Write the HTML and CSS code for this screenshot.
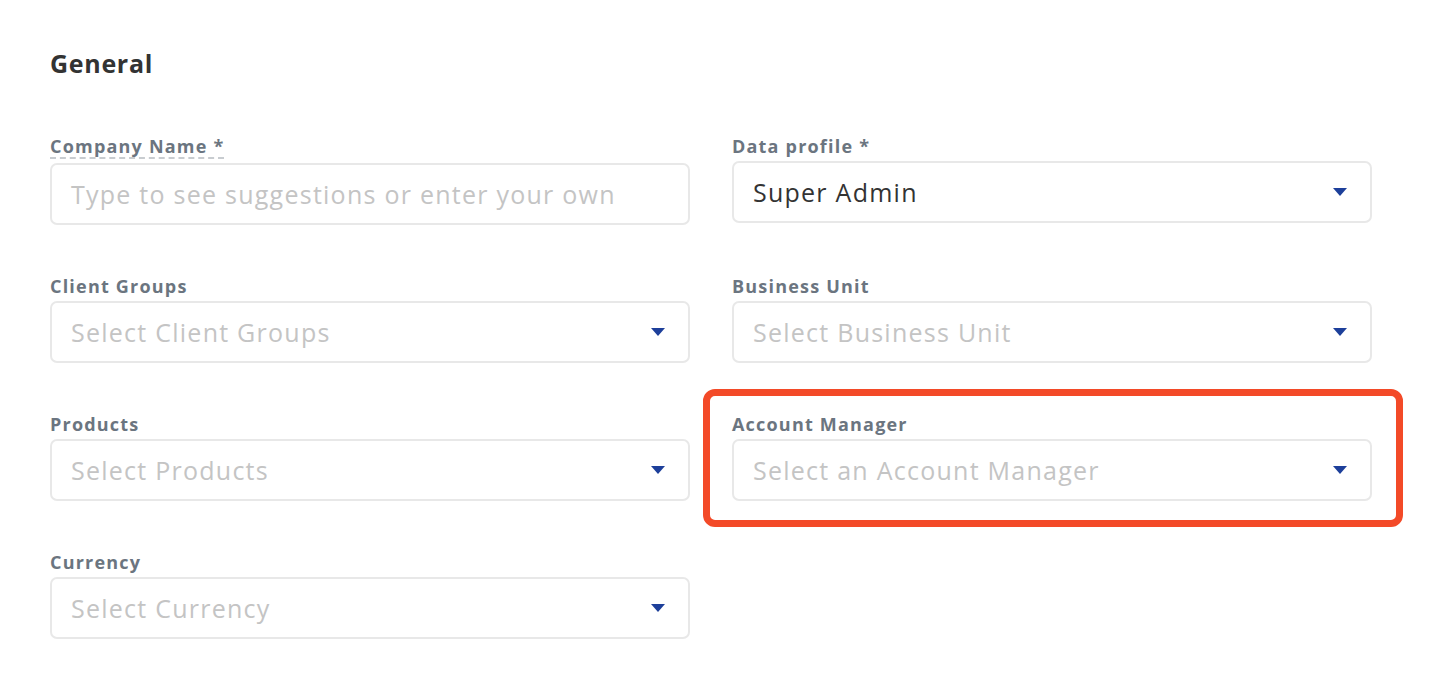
FILE: index.html
```html
<!DOCTYPE html>
<html lang="en">
<head>
<meta charset="utf-8">
<link rel="stylesheet" href="styles.css">
</head>
<body>
<div class="page">
  <h2 class="title">General</h2>
  <div class="grid">
    <div class="field">
      <label class="label label-dashed">Company Name *</label>
      <div class="input"><span class="placeholder">Type to see suggestions or enter your own</span></div>
    </div>
    <div class="field">
      <label class="label">Data profile *</label>
      <div class="input select"><span class="value">Super Admin</span><span class="caret"></span></div>
    </div>
    <div class="field">
      <label class="label">Client Groups</label>
      <div class="input select"><span class="placeholder">Select Client Groups</span><span class="caret"></span></div>
    </div>
    <div class="field">
      <label class="label">Business Unit</label>
      <div class="input select"><span class="placeholder">Select Business Unit</span><span class="caret"></span></div>
    </div>
    <div class="field">
      <label class="label">Products</label>
      <div class="input select"><span class="placeholder">Select Products</span><span class="caret"></span></div>
    </div>
    <div class="field highlighted">
      <label class="label">Account Manager</label>
      <div class="input select"><span class="placeholder">Select an Account Manager</span><span class="caret"></span></div>
      <div class="highlight-box"></div>
    </div>
    <div class="field">
      <label class="label">Currency</label>
      <div class="input select"><span class="placeholder">Select Currency</span><span class="caret"></span></div>
    </div>
  </div>
</div>
</body>
</html>
```
FILE: styles.css
```css
* { box-sizing: border-box; }
html, body { margin: 0; padding: 0; background: #ffffff; }
body { font-family: "Open Sans", "Noto Sans", sans-serif; }
.page { padding: 46px 0 0 50px; }
.title {
  margin: 0;
  font-size: 25px;
  font-weight: 700;
  color: #333333;
  line-height: 34px;
  letter-spacing: 0.7px;
}
.grid {
  margin-top: 55px;
  display: grid;
  grid-template-columns: 640px 640px;
  column-gap: 42px;
  row-gap: 50px;
}
.field { position: relative; display: flex; flex-direction: column; align-items: flex-start; }
.label {
  font-size: 18px;
  font-weight: 700;
  color: #6b7580;
  line-height: 22px;
  margin-bottom: 4px;
  letter-spacing: 1.2px;
}
.label-dashed { border-bottom: 2px dashed #c8ccd0; margin-bottom: 4px; }
.input {
  width: 640px;
  height: 62px;
  border: 2px solid #e8e8e8;
  border-radius: 7px;
  display: flex;
  align-items: center;
  padding: 0 20px 0 19px;
  font-size: 25px;
  letter-spacing: 1.25px;
}
.placeholder { color: #c4c4c4; flex: 1; }
.value { color: #333333; flex: 1; }
.caret {
  width: 0; height: 0;
  border-left: 7px solid transparent;
  border-right: 7px solid transparent;
  border-top: 8px solid #1d3f9a;
  margin-right: 3px;
}
.highlight-box {
  position: absolute;
  left: -29px; top: -24px; right: -31px; bottom: -26px;
  border: 7px solid #f34a28;
  border-radius: 12px;
  pointer-events: none;
}
```
